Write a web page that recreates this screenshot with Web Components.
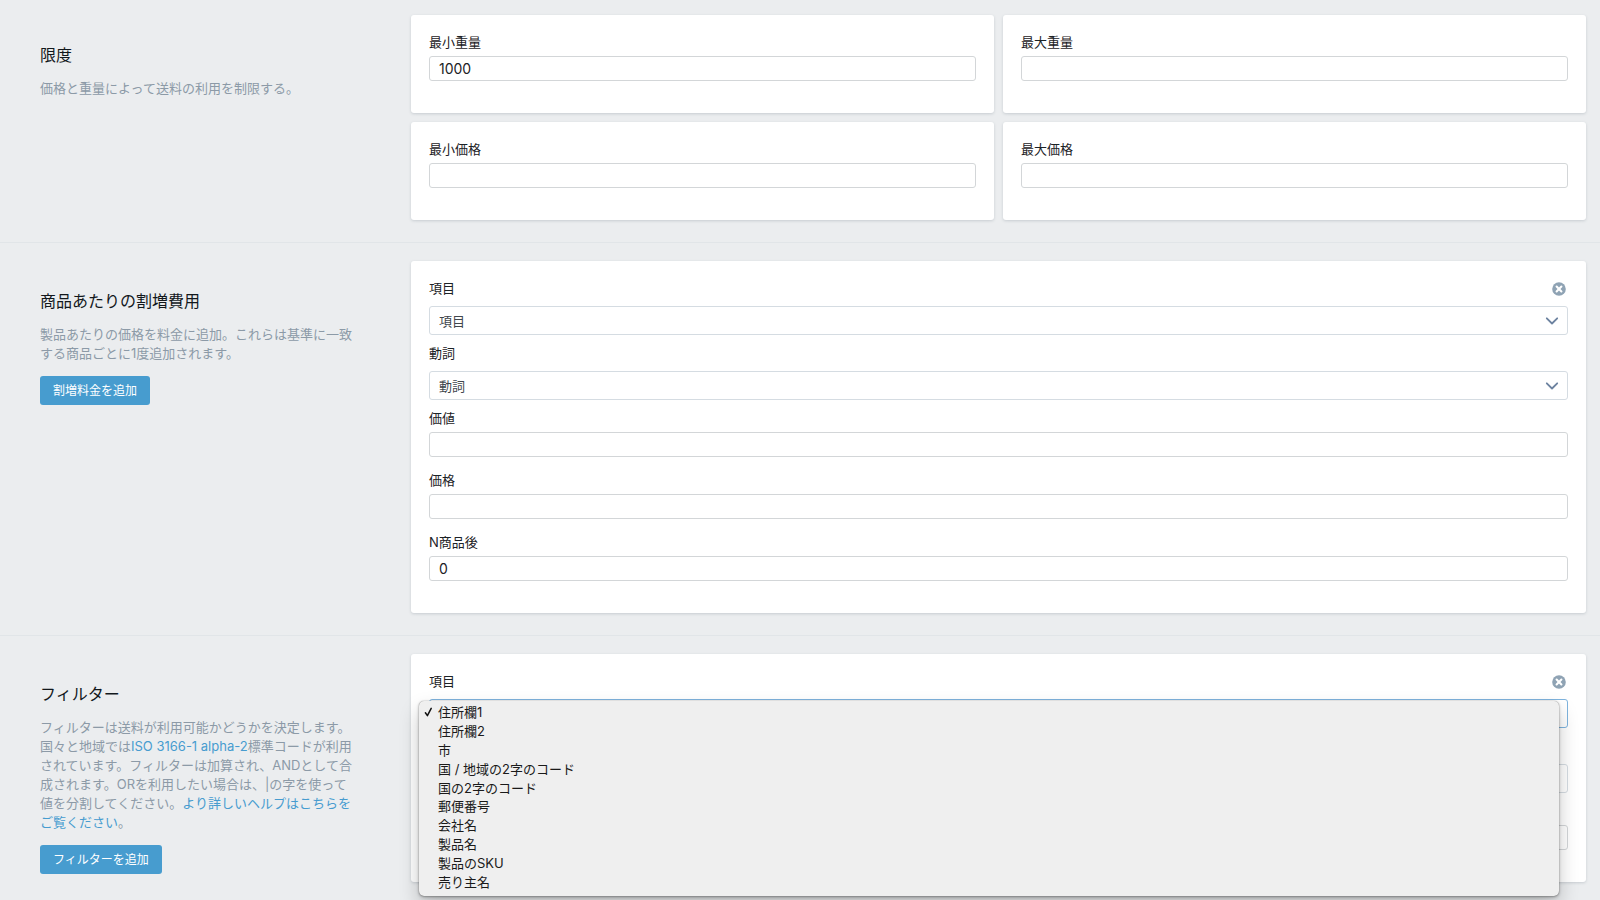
<!DOCTYPE html>
<html lang="ja">
<head>
<meta charset="utf-8">
<title>送料設定</title>
<style>
  body {
    margin: 0;
    background: #ebeef0;
    color: #1c2226;
    font: 13px/20px Inter, "Noto Sans CJK JP", sans-serif;
  }
</style>
</head>
<body>
<settings-page></settings-page>

<template id="settings-page">
  <style>
    :host { display: block; min-height: 100vh; background: #ebedef; }
    .limits { display: grid; grid-template-columns: 1fr 1fr; gap: 9px; }
    settings-section:first-of-type { --section-top: 15px; }
    settings-section:last-of-type { --section-bottom: 0; --section-line: 0; }
    a { color: #479ccf; text-decoration: none; }
  </style>
  <settings-section>
    <span slot="title">限度</span>
    <span slot="description">価格と重量によって送料の利用を制限する。</span>
    <div class="limits">
      <form-card><text-field label="最小重量" value="1000"></text-field></form-card>
      <form-card><text-field label="最大重量"></text-field></form-card>
      <form-card><text-field label="最小価格"></text-field></form-card>
      <form-card><text-field label="最大価格"></text-field></form-card>
    </div>
  </settings-section>
  <settings-section>
    <span slot="title">商品あたりの割増費用</span>
    <span slot="description">製品あたりの価格を料金に追加。これらは基準に一致する商品ごとに1度追加されます。</span>
    <action-button slot="action">割増料金を追加</action-button>
    <form-card>
      <select-field label="項目" value="項目"><close-button slot="tool"></close-button></select-field>
      <select-field label="動詞" value="動詞"></select-field>
      <text-field label="価値"></text-field>
      <text-field label="価格"></text-field>
      <text-field label="N商品後" value="0"></text-field>
    </form-card>
  </settings-section>
  <settings-section>
    <span slot="title">フィルター</span>
    <span slot="description">フィルターは送料が利用可能かどうかを決定します。国々と地域では<a href="#iso">ISO 3166-1 alpha-2</a>標準コードが利用されています。フィルターは加算され、ANDとして合成されます。ORを利用したい場合は、|の字を使って値を分割してください。<a href="#help">より詳しいヘルプはこちらをご覧ください</a>。</span>
    <action-button slot="action">フィルターを追加</action-button>
    <form-card>
      <select-field label="項目" open>
        <close-button slot="tool"></close-button>
        <option-menu slot="menu" options="住所欄1,住所欄2,市,国 / 地域の2字のコード,国の2字のコード,郵便番号,会社名,製品名,製品のSKU,売り主名"></option-menu>
      </select-field>
      <select-field name="verb"></select-field>
      <text-field name="value"></text-field>
    </form-card>
  </settings-section>
</template>

<template id="settings-section">
  <style>
    :host {
      display: grid;
      grid-template-columns: 411px minmax(0, 1fr);
      padding: var(--section-top, 18px) 14px var(--section-bottom, 22px) 0;
      border-bottom: var(--section-line, 1px) solid #e1e5e8;
    }
    aside { padding: 30px 40px 0; }
    h2 { margin: 0 0 14px; font-size: 16px; line-height: 20px; font-weight: 400; color: #12181c; }
    p { margin: 0 0 13px; max-width: 318px; line-height: 19px; color: #8c9aa7; }
  </style>
  <aside>
    <h2><slot name="title"></slot></h2>
    <p><slot name="description"></slot></p>
    <slot name="action"></slot>
  </aside>
  <div><slot></slot></div>
</template>

<template id="form-card">
  <style>
    :host {
      display: block;
      padding: 17px 18px 19px;
      border-radius: 3px;
      background: #fff;
      box-shadow: 0 1px 3px rgba(60, 75, 90, .2);
    }
  </style>
  <slot></slot>
</template>

<template id="action-button">
  <style>
    :host { display: block; }
    button {
      display: block;
      height: 29px;
      padding: 0 13px;
      border: 0;
      border-radius: 3px;
      background: #479ccf;
      color: #fff;
      font: 400 12px/20px Inter, "Noto Sans CJK JP", sans-serif;
    }
  </style>
  <button type="button"><slot></slot></button>
</template>

<template id="close-button">
  <style>
    :host { display: block; }
    button { display: grid; place-items: center; width: 18px; height: 22px; padding: 0; border: 0; background: none; }
    svg { display: block; }
  </style>
  <button type="button" aria-label="削除">
    <svg width="14" height="14" viewBox="0 0 14 14">
      <circle cx="7" cy="7" r="6.8" fill="#8fa3b4"/>
      <path d="M4.6 4.6l4.8 4.8M9.4 4.6L4.6 9.4" stroke="#fff" stroke-width="2.1" stroke-linecap="round"/>
    </svg>
  </button>
</template>

<template id="text-field">
  <style>
    :host { display: block; margin-bottom: 13px; }
    label { display: block; height: 20px; margin-bottom: 4px; }
    input {
      display: block;
      box-sizing: border-box;
      width: 100%;
      height: 25px;
      padding: 0 9px;
      border: 1px solid #d3d6d8;
      border-radius: 3px;
      background: #fff;
      color: #1c2226;
      font: 14px/20px Inter, "Noto Sans CJK JP", sans-serif;
      outline: none;
    }
  </style>
  <label for="control"></label>
  <input id="control" type="text">
</template>

<template id="select-field">
  <style>
    :host { display: block; margin-bottom: 8px; }
    .head { display: flex; justify-content: space-between; height: 20px; margin-bottom: 8px; }
    .box { position: relative; }
    select {
      appearance: none;
      display: block;
      box-sizing: border-box;
      width: 100%;
      height: 29px;
      padding: 0 32px 0 9px;
      border: 1px solid #d5dce2;
      border-radius: 3px;
      background: #fff;
      color: #41474c;
      font: 13px/20px Inter, "Noto Sans CJK JP", sans-serif;
      outline: none;
    }
    :host([open]) select { border-color: #7fb4de; }
    :host(:not([value])) svg { display: none; }
    svg { position: absolute; right: 9px; top: 11px; pointer-events: none; }
    ::slotted([slot="menu"]) { position: absolute; z-index: 1; top: 2px; left: -10px; right: 9px; }
  </style>
  <div class="head"><label for="control"></label><slot name="tool"></slot></div>
  <div class="box">
    <select id="control"></select>
    <svg width="14" height="8" viewBox="0 0 14 8" fill="none" stroke="#6d83a0" stroke-width="1.8" stroke-linecap="round" stroke-linejoin="round"><path d="M1.8 1.3L7 6.5l5.2-5.2"/></svg>
    <slot name="menu"></slot>
  </div>
</template>

<template id="option-menu">
  <style>
    :host { display: block; }
    ul {
      display: flex;
      flex-direction: column;
      box-sizing: border-box;
      height: 195px;
      margin: 0;
      padding: 2px 0 5px;
      list-style: none;
      border-radius: 5px;
      background: #efefef;
      color: #1a1a1a;
      box-shadow: 0 0 1px rgba(0, 0, 0, .45), 0 1px 3px rgba(0, 0, 0, .35), 0 10px 20px rgba(0, 0, 0, .22);
    }
    li { flex: 1 1 0; display: flex; align-items: center; min-height: 0; line-height: 18px; }
    li::before { content: ""; width: 19px; }
    li[aria-selected="true"]::before { display: none; }
    svg { width: 9px; height: 10px; margin: 0 5px; }
  </style>
  <ul role="listbox"></ul>
</template>

<script>
  class TemplateElement extends HTMLElement {
    constructor() {
      super();
      const template = document.getElementById(this.localName);
      this.attachShadow({ mode: "open" }).append(template.content.cloneNode(true));
    }
    find(selector) { return this.shadowRoot.querySelector(selector); }
  }

  class FieldElement extends TemplateElement {
    connectedCallback() {
      const label = this.getAttribute("label");
      if (label) this.find("label").textContent = label;
      else this.find("#control").setAttribute("aria-label", this.getAttribute("name"));
    }
  }

  customElements.define("form-card", class extends TemplateElement {});
  customElements.define("action-button", class extends TemplateElement {});
  customElements.define("close-button", class extends TemplateElement {});
  customElements.define("settings-section", class extends TemplateElement {});

  customElements.define("text-field", class extends FieldElement {
    connectedCallback() {
      super.connectedCallback();
      this.find("input").value = this.getAttribute("value") || "";
    }
  });

  customElements.define("select-field", class extends FieldElement {
    connectedCallback() {
      super.connectedCallback();
      const value = this.getAttribute("value");
      if (value) this.find("select").replaceChildren(new Option(value));
    }
  });

  customElements.define("option-menu", class extends TemplateElement {
    connectedCallback() {
      this.find("ul").replaceChildren(...this.getAttribute("options").split(",").map((text, index) => {
        const item = document.createElement("li");
        item.setAttribute("role", "option");
        item.setAttribute("aria-selected", String(index === 0));
        if (index === 0) {
          item.innerHTML = '<svg viewBox="0 0 9 10" fill="none" stroke="#111" stroke-width="1.5" stroke-linecap="round" stroke-linejoin="round"><path d="M1.4 5.8l2 2.8L7.2 1.4"/></svg>';
        }
        const label = document.createElement("span");
        label.textContent = text;
        item.append(label);
        return item;
      }));
    }
  });

  customElements.define("settings-page", class extends TemplateElement {});
</script>
</body>
</html>
